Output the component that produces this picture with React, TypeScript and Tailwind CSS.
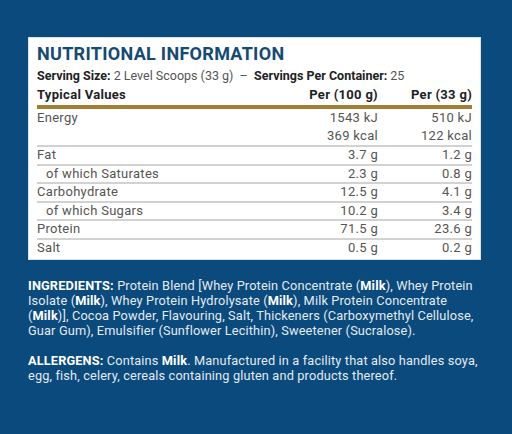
import React from "react";

const rows = [
  { label: "Fat", a: "3.7 g", b: "1.2 g" },
  { label: "of which Saturates", a: "2.3 g", b: "0.8 g", sub: true },
  { label: "Carbohydrate", a: "12.5 g", b: "4.1 g" },
  { label: "of which Sugars", a: "10.2 g", b: "3.4 g", sub: true },
  { label: "Protein", a: "71.5 g", b: "23.6 g" },
  { label: "Salt", a: "0.5 g", b: "0.2 g" },
];

const App: React.FC = () => {
  return (
    <div
      className="w-[512px] h-[434px] bg-[#0b4a7c] pt-[37px] px-[28px]"
      style={{ fontFamily: "Roboto, 'Noto Sans', sans-serif" }}
    >
      <div className="w-[453px] bg-white px-2 pt-[5px] pb-[3px] border border-[#d9e2ea]">
        <h1 className="text-[18px] leading-[22px] font-bold text-[#144a73] tracking-[0.3px]">
          NUTRITIONAL INFORMATION
        </h1>
        <p className="text-[12.5px] leading-[18px] mt-[2px] text-[#555]">
          <span className="font-bold text-[#222]">Serving Size:</span> 2 Level Scoops (33 g) &nbsp;–&nbsp;{" "}
          <span className="font-bold text-[#222]">Servings Per Container:</span> 25
        </p>
        <div className="grid grid-cols-[1fr_110px_94px] text-[13px] tracking-[0.3px] leading-[18px] mt-[1px]">
          <div className="font-bold text-[#222] pb-[1px]">Typical Values</div>
          <div className="font-bold text-[#222] text-right pb-[1px]">Per (100 g)</div>
          <div className="font-bold text-[#222] text-right pb-[1px]">Per (33 g)</div>
          <div className="col-span-3 h-[4px] bg-[#a27f35]" />
          <div className="text-[#555]">Energy</div>
          <div className="text-[#555] text-right">
            1543 kJ
            <br />
            369 kcal
          </div>
          <div className="text-[#555] text-right">
            510 kJ
            <br />
            122 kcal
          </div>
          {rows.map((r) => (
            <React.Fragment key={r.label}>
              <div className="col-span-3 h-[2px] bg-[#d2d2d2]" />
              <div className={`text-[#555] leading-[16.5px] ${r.sub ? "pl-[9px]" : ""}`}>{r.label}</div>
              <div className="text-[#555] leading-[16.5px] text-right">{r.a}</div>
              <div className="text-[#555] leading-[16.5px] text-right">{r.b}</div>
            </React.Fragment>
          ))}
        </div>
      </div>
      <div className="mt-[18px] text-[12.75px] tracking-[0.15px] leading-[15px] text-[#e4ebf2] w-[456px]">
        <p>
          <span className="font-bold text-white">INGREDIENTS:</span> Protein Blend [Whey Protein Concentrate (
          <span className="font-bold text-white">Milk</span>), Whey Protein Isolate (
          <span className="font-bold text-white">Milk</span>), Whey Protein Hydrolysate (
          <span className="font-bold text-white">Milk</span>), Milk Protein Concentrate (
          <span className="font-bold text-white">Milk</span>)], Cocoa Powder, Flavouring, Salt, Thickeners
          (Carboxymethyl Cellulose, Guar Gum), Emulsifier (Sunflower Lecithin), Sweetener (Sucralose).
        </p>
        <p className="mt-[15px]">
          <span className="font-bold text-white">ALLERGENS:</span> Contains{" "}
          <span className="font-bold text-white">Milk</span>. Manufactured in a facility that also handles soya,
          egg, fish, celery, cereals containing gluten and products thereof.
        </p>
      </div>
    </div>
  );
};

export default App;
